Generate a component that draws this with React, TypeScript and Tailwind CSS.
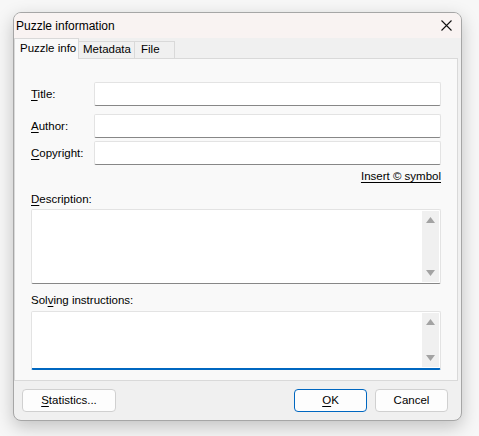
import React from "react";

const font = { fontFamily: '"Liberation Sans", Arial, sans-serif' };

function Key({ children }: { children: React.ReactNode }) {
  return <span className="underline underline-offset-2">{children}</span>;
}

function TextBox() {
  return <div className="h-[24px] flex-1 bg-white border border-[#e3e3e3] border-b-[#878787] rounded-[2px]" />;
}

function ScrollBar() {
  return (
    <div className="w-[17px] m-px bg-[#f0f0f0] flex flex-col items-center justify-between py-[6px]">
      <svg width="9" height="6" viewBox="0 0 9 6">
        <path d="M4.5 0 L9 6 L0 6 Z" fill="#a3a3a3" />
      </svg>
      <svg width="9" height="6" viewBox="0 0 9 6">
        <path d="M0 0 L9 0 L4.5 6 Z" fill="#a3a3a3" />
      </svg>
    </div>
  );
}

export default function App() {
  return (
    <div className="w-[479px] h-[436px] bg-[#f7f7f7] pl-[13px] pt-[12px] text-[11.5px] text-black whitespace-nowrap" style={font}>
      <div className="w-[449px] h-[409px] rounded-[8px] border border-[#a6a6a6] bg-[#f0f0f0] overflow-hidden flex flex-col shadow-[0_6px_18px_rgba(0,0,0,0.22)]">
        {/* Title bar */}
        <div className="h-[25px] shrink-0 bg-[#f9f3f2] flex items-center justify-between pl-[2px] pr-[9px]">
          <span className="text-[12px] leading-none">Puzzle information</span>
          <svg width="11" height="11" viewBox="0 0 11 11">
            <path d="M0.5 0.5 L10.5 10.5 M10.5 0.5 L0.5 10.5" stroke="#111" strokeWidth="1.1" />
          </svg>
        </div>

        {/* Tabs */}
        <div className="h-[20px] shrink-0 flex items-end">
          <div className="relative z-10 -mb-px h-[21px] w-[65px] bg-[#f9f9f9] border border-b-0 border-[#d9d9d9] pl-[5px] flex items-center">
            Puzzle info
          </div>
          <div className="h-[17px] w-[56px] border-t border-r border-[#d9d9d9] pl-[4px] flex items-center">Metadata</div>
          <div className="h-[17px] w-[40px] border-t border-r border-[#d9d9d9] pl-[6px] flex items-center">File</div>
        </div>

        {/* Panel */}
        <div className="h-[323px] w-[444px] shrink-0 border border-[#d9d9d9] bg-[#f9f9f9] px-[16px] pt-[23px] flex flex-col">
          <div className="flex items-start">
            <span className="w-[63px] pt-[4px]"><Key>T</Key>itle:</span>
            <TextBox />
          </div>
          <div className="flex items-start mt-[8px]">
            <span className="w-[63px] pt-[4px]"><Key>A</Key>uthor:</span>
            <TextBox />
          </div>
          <div className="flex items-start mt-[3px]">
            <span className="w-[63px] pt-[4px]"><Key>C</Key>opyright:</span>
            <TextBox />
          </div>
          <div className="flex justify-end mt-[3px] leading-[16px]">
            <span className="underline underline-offset-2">Insert © symbol</span>
          </div>
          <div className="mt-[7px] leading-[16px]"><Key>D</Key>escription:</div>
          <div className="mt-[2px] h-[75px] bg-white border border-[#e3e3e3] border-b-[#878787] rounded-[2px] flex justify-end">
            <ScrollBar />
          </div>
          <div className="mt-[8px] leading-[16px]">Sol<Key>v</Key>ing instructions:</div>
          <div className="mt-[3px] h-[59px] bg-white border border-[#e3e3e3] border-b-2 border-b-[#0067c0] rounded-[2px] flex justify-end">
            <ScrollBar />
          </div>
        </div>

        {/* Buttons */}
        <div className="flex-1 flex items-start pt-[8px] pl-[8px] pr-[13px]">
          <button className="h-[23px] w-[94px] bg-[#fdfdfd] border border-[#d0d0d0] rounded-[4px]">
            <Key>S</Key>tatistics...
          </button>
          <div className="flex-1" />
          <button className="h-[23px] w-[73px] bg-[#fdfdfd] border border-[#0067c0] rounded-[4px]">
            <Key>O</Key>K
          </button>
          <button className="ml-[8px] h-[23px] w-[73px] bg-[#fdfdfd] border border-[#d0d0d0] rounded-[4px]">
            Cancel
          </button>
        </div>
      </div>
    </div>
  );
}
